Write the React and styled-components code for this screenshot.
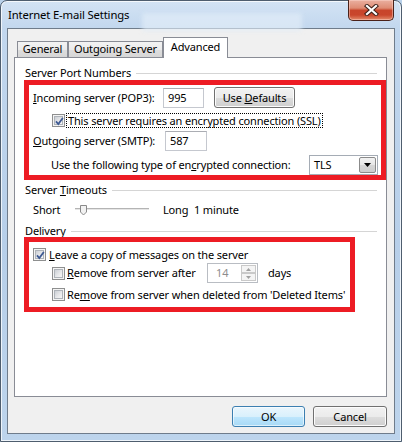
import React from "react";
import styled, { createGlobalStyle, css } from "styled-components";

const GlobalStyle = createGlobalStyle`
	html, body {
		margin: 0;
		padding: 0;
	}
	body {
		width: 402px;
		height: 442px;
		overflow: hidden;
		background: #b9d1ea;
		font-family: "Segoe UI", "Noto Sans", sans-serif;
		font-size: 11px;
		letter-spacing: -0.15px;
		color: #000;
	}
`;

const Window = styled.div`
	box-sizing: border-box;
	position: relative;
	width: 402px;
	height: 442px;
	display: flex;
	flex-direction: column;
	padding: 0 6px 7px 6px;
	border: 1px solid #4e5d6e;
	border-radius: 7px 7px 0 0;
	background: linear-gradient(180deg, #d3e3f4 0%, #c2d7ee 28px, #b7cfe9 55%, #bdd4ec 100%);
	box-shadow: inset 0 0 0 1px rgba(255, 255, 255, 0.75);
`;

const TitleBar = styled.div`
	position: relative;
	height: 27px;
	flex: none;
	display: flex;
	align-items: flex-start;
	justify-content: space-between;
`;

/* blurred window behind the glass caption */
const GlassPatch = styled.div`
	position: absolute;
	left: 135px;
	top: 12px;
	width: 160px;
	height: 18px;
	border-radius: 3px;
	background: rgba(225, 236, 248, 0.7);
	filter: blur(2px);
`;

const Title = styled.div`
	position: relative;
	margin: 7px 0 0 1px;
	font-size: 11.3px;
	line-height: 14px;
	color: #000;
`;

const CloseButton = styled.div`
	position: relative;
	box-sizing: border-box;
	width: 46px;
	height: 21px;
	margin: -1px 1px 0 0;
	display: flex;
	align-items: center;
	justify-content: center;
	border: 1px solid #4a2119;
	border-top: none;
	border-radius: 0 0 5px 5px;
	background: linear-gradient(180deg, #eab0a0 0%, #de8c74 40%, #c8452b 52%, #c9462c 75%, #e38b6b 100%);
	box-shadow: inset 0 0 0 1px rgba(255, 220, 210, 0.45);
`;

const Client = styled.div`
	box-sizing: border-box;
	flex: 1;
	display: flex;
	flex-direction: column;
	padding: 8px 7px 0 6px;
	border: 1px solid #6f7c8b;
	background: #f0f0f0;
`;

const TabStrip = styled.div`
	position: relative;
	z-index: 1;
	height: 21px;
	margin-bottom: -1px;
	padding-left: 3px;
	display: flex;
	align-items: flex-start;
`;

const Tab = styled.div`
	box-sizing: border-box;
	width: ${(p) => p.$w}px;
	display: flex;
	justify-content: center;
	border: 1px solid #898c95;
	border-bottom: none;
	${(p) =>
		p.$active
			? css`
					height: 21px;
					padding-top: 2px;
					background: #fff;
				`
			: css`
					height: 16px;
					margin-top: 4px;
					padding-top: 0;
					background: linear-gradient(180deg, #f3f3f3 0%, #ebebeb 50%, #dedede 51%, #d6d6d6 100%);
				`}
	line-height: 14px;
`;

const Panel = styled.div`
	box-sizing: border-box;
	width: 373px;
	height: 340px;
	flex: none;
	display: flex;
	flex-direction: column;
	align-items: flex-start;
	padding: 8px 0 0 9px;
	border: 1px solid #898c95;
	background: #fff;
`;

const GroupHeader = styled.div`
	align-self: stretch;
	height: 14px;
	margin: ${(p) => p.$top || 0}px 9px 0 1px;
	display: flex;
	align-items: center;
	line-height: 14px;
	&::after {
		content: "";
		flex: 1;
		margin-left: 5px;
		border-top: 1px solid #d5d5d5;
	}
`;

const RedBox = styled.div`
	box-sizing: border-box;
	align-self: ${(p) => (p.$w ? "flex-start" : "stretch")};
	width: ${(p) => (p.$w ? `${p.$w}px` : "auto")};
	height: ${(p) => p.$h}px;
	margin-top: ${(p) => p.$top || 0}px;
	padding: ${(p) => p.$pad}px 0 0 4px;
	display: flex;
	flex-direction: column;
	border: 5px solid #ed1c24;
`;

const Row = styled.div`
	height: ${(p) => p.$h}px;
	margin-top: ${(p) => p.$top || 0}px;
	padding-left: ${(p) => p.$indent || 0}px;
	display: flex;
	align-items: center;
	line-height: 14px;
	white-space: nowrap;
`;

const Label = styled.span`
	flex: none;
	width: ${(p) => (p.$w ? `${p.$w}px` : "auto")};
	margin-left: ${(p) => p.$gap || 0}px;
`;

const Key = styled.span`
	text-decoration: underline;
`;

const TextBox = styled.div`
	box-sizing: border-box;
	width: ${(p) => p.$w}px;
	height: 20px;
	padding: 2px 4px 0;
	border: 1px solid #c5c8cf;
	border-top-color: #abadb3;
	background: #fff;
	line-height: 14px;
`;

const Button = styled.div`
	box-sizing: border-box;
	width: ${(p) => p.$w}px;
	height: 21px;
	margin-left: ${(p) => p.$gap || 0}px;
	display: flex;
	align-items: center;
	justify-content: center;
	border: 1px solid ${(p) => (p.$default ? "#3c7fb1" : "#707070")};
	border-radius: 3px;
	background: ${(p) =>
		p.$default
			? "linear-gradient(180deg, #eaf6fd 0%, #d9f0fc 50%, #bee6fd 51%, #a7d9f5 100%)"
			: "linear-gradient(180deg, #f2f2f2 0%, #ebebeb 50%, #dddddd 51%, #cfcfcf 100%)"};
	box-shadow: inset 0 0 0 1px ${(p) => (p.$default ? "rgba(255,255,255,0.6)" : "#fcfcfc")};
	line-height: 14px;
`;

const CheckBox = styled.span`
	box-sizing: border-box;
	position: relative;
	flex: none;
	width: 13px;
	height: 13px;
	display: flex;
	align-items: center;
	justify-content: center;
	border: 1px solid #8e8f8f;
	background: #f4f4f4;
	&::before {
		content: "";
		box-sizing: border-box;
		width: 9px;
		height: 9px;
		border: 1px solid #aeb3b9;
		background: linear-gradient(135deg, #cbcfd5 0%, #e9eaec 60%, #f6f6f6 100%);
	}
	svg {
		position: absolute;
		left: 0;
		top: 0;
	}
`;

const FocusLabel = styled.span`
	margin-left: 1px;
	padding: 0 1px 0 1px;
	border: 1px dotted #000;
	line-height: 13px;
`;

const Select = styled.div`
	box-sizing: border-box;
	width: 69px;
	height: 20px;
	display: flex;
	align-items: center;
	justify-content: space-between;
	padding: 0 1px 0 4px;
	border: 1px solid #a5acb5;
	background: #fff;
`;

const DropButton = styled.span`
	box-sizing: border-box;
	width: 17px;
	height: 16px;
	display: flex;
	align-items: center;
	justify-content: center;
	border: 1px solid #8b8b8b;
	border-radius: 2px;
	background: linear-gradient(180deg, #f2f2f2 0%, #e6e6e6 50%, #d6d6d6 51%, #cdcdcd 100%);
`;

const Slider = styled.div`
	position: relative;
	flex: none;
	width: 74px;
	height: 18px;
	&::before {
		content: "";
		position: absolute;
		left: 0;
		right: 0;
		top: 7px;
		height: 1px;
		border-top: 1px solid #b4b4b4;
		border-bottom: 1px solid #fff;
		background: #e6e6e6;
	}
	svg {
		position: absolute;
		left: 5px;
		top: 4px;
	}
`;

const SpinBox = styled.div`
	box-sizing: border-box;
	width: 51px;
	height: 20px;
	display: flex;
	align-items: center;
	justify-content: space-between;
	padding: 0 1px 0 8px;
	border: 1px solid #b9bdc3;
	background: #fff;
	color: #8d8d8d;
`;

const Spinner = styled.span`
	display: flex;
	flex-direction: column;
`;

const SpinButton = styled.span`
	box-sizing: border-box;
	width: 15px;
	height: 8px;
	display: flex;
	align-items: center;
	justify-content: center;
	border: 1px solid #c9c9c9;
	background: #f4f4f4;
`;

const Footer = styled.div`
	margin-top: 9px;
	display: flex;
	justify-content: flex-end;
	gap: 8px;
`;

const Check = ({ checked }) => (
	<CheckBox>
		{checked && (
			<svg width="13" height="13" viewBox="0 0 13 13">
				<path d="M3 6.4 L5.3 9 L9.8 3" fill="none" stroke="#3e5a93" strokeWidth="1.8" />
			</svg>
		)}
	</CheckBox>
);

const CloseGlyph = () => (
	<svg width="15" height="12" viewBox="0 0 15 12">
		<path d="M3 2 L12 10 M12 2 L3 10" stroke="#3d2019" strokeWidth="4.2" strokeLinecap="square" />
		<path d="M3 2 L12 10 M12 2 L3 10" stroke="#fff" strokeWidth="2.2" strokeLinecap="square" />
	</svg>
);

const SpinArrow = ({ down }) => (
	<svg width="5" height="3" viewBox="0 0 5 3">
		<path d={down ? "M0 0 H5 L2.5 3 Z" : "M0 3 H5 L2.5 0 Z"} fill="#a0a0a0" />
	</svg>
);

export default function App() {
	return (
		<>
			<GlobalStyle />
			<Window>
				<TitleBar>
					<GlassPatch />
					<Title>Internet E-mail Settings</Title>
					<CloseButton>
						<CloseGlyph />
					</CloseButton>
				</TitleBar>
				<Client>
					<TabStrip>
						<Tab $w={51}>General</Tab>
						<Tab $w={95}>Outgoing Server</Tab>
						<Tab $w={65} $active>
							Advanced
						</Tab>
					</TabStrip>
					<Panel>
						<GroupHeader>Server Port Numbers</GroupHeader>
						<RedBox $h={100} $pad={2}>
							<Row $h={21}>
								<Label $w={130}>
									<Key>I</Key>ncoming server (POP3):
								</Label>
								<TextBox $w={41}>995</TextBox>
								<Button $w={81} $gap={10}>
									Use&nbsp;<Key>D</Key>efaults
								</Button>
							</Row>
							<Row $h={15} $top={5} $indent={19}>
								<Check checked />
								<FocusLabel>This server requires an encrypted connection (SSL)</FocusLabel>
							</Row>
							<Row $h={20} $top={3}>
								<Label $w={132}>
									<Key>O</Key>utgoing server (SMTP):
								</Label>
								<TextBox $w={42}>587</TextBox>
							</Row>
							<Row $h={20} $top={4} $indent={18}>
								<Label $w={258}>
									Use the following type of en<Key>c</Key>rypted connection:
								</Label>
								<Select>
									<span>TLS</span>
									<DropButton>
										<svg width="7" height="4" viewBox="0 0 7 4">
											<path d="M0 0 H7 L3.5 4 Z" fill="#000" />
										</svg>
									</DropButton>
								</Select>
							</Row>
						</RedBox>
						<GroupHeader $top={3}>
							<span>
								Server <Key>T</Key>imeouts
							</span>
						</GroupHeader>
						<Row $h={18} $top={4} $indent={9}>
							<Label $w={42}>Short</Label>
							<Slider>
								<svg width="7" height="11" viewBox="0 0 7 11">
									<path d="M0.5 0.5 H6.5 V7 L3.5 10 L0.5 7 Z" fill="#f2f2f2" stroke="#8a8a8a" />
								</svg>
							</Slider>
							<Label $w={31} $gap={14}>
								Long
							</Label>
							<Label>1 minute</Label>
						</Row>
						<GroupHeader $top={5}>Delivery</GroupHeader>
						<RedBox $w={331} $h={75} $top={-1} $pad={4}>
							<Row $h={17}>
								<Check checked />
								<Label $gap={3}>
									<Key>L</Key>eave a copy of messages on the server
								</Label>
							</Row>
							<Row $h={20} $indent={19}>
								<Check />
								<Label $w={140} $gap={2}>
									<Key>R</Key>emove from server after
								</Label>
								<SpinBox>
									<span>14</span>
									<Spinner>
										<SpinButton>
											<SpinArrow />
										</SpinButton>
										<SpinButton>
											<SpinArrow down />
										</SpinButton>
									</Spinner>
								</SpinBox>
								<Label $gap={10}>days</Label>
							</Row>
							<Row $h={17} $top={3} $indent={19}>
								<Check />
								<Label $gap={2}>
									Re<Key>m</Key>ove from server when deleted from 'Deleted Items'
								</Label>
							</Row>
						</RedBox>
					</Panel>
					<Footer>
						<Button $w={73} $default>
							OK
						</Button>
						<Button $w={74}>Cancel</Button>
					</Footer>
				</Client>
			</Window>
		</>
	);
}
